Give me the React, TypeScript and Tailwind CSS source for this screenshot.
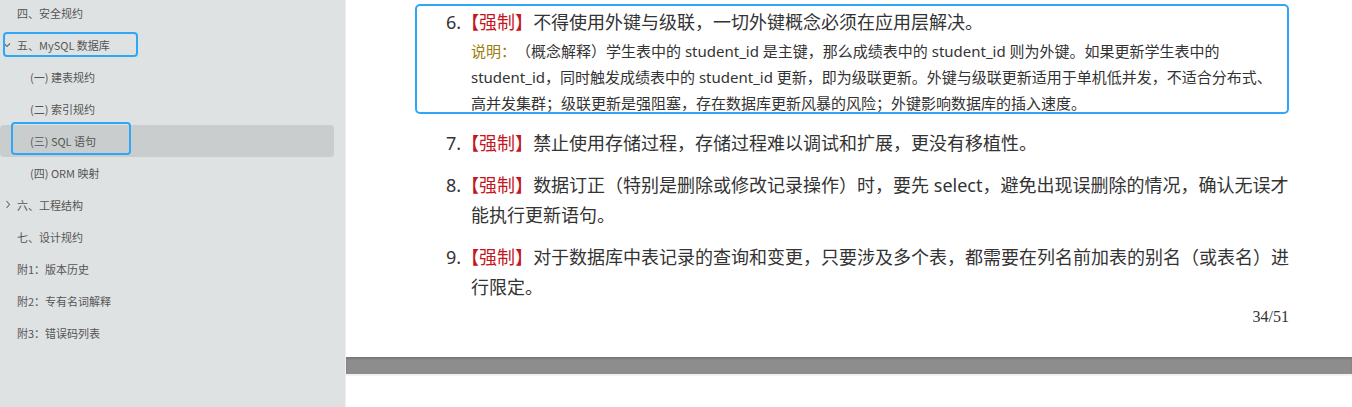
import React from "react"

type NavItem = {
  label: string
  level: 0 | 1
  chevron?: "down" | "right"
  active?: boolean
}

const navItems: NavItem[] = [
  { label: "四、安全规约", level: 0 },
  { label: "五、MySQL 数据库", level: 0, chevron: "down" },
  { label: "(一) 建表规约", level: 1 },
  { label: "(二) 索引规约", level: 1 },
  { label: "(三) SQL 语句", level: 1, active: true },
  { label: "(四) ORM 映射", level: 1 },
  { label: "六、工程结构", level: 0, chevron: "right" },
  { label: "七、设计规约", level: 0 },
  { label: "附1：版本历史", level: 0 },
  { label: "附2：专有名词解释", level: 0 },
  { label: "附3：错误码列表", level: 0 },
]

const docFont = { fontFamily: '"Noto Sans", "Noto Sans CJK SC", sans-serif' }

function Chevron({ dir }: { dir: "down" | "right" }) {
  if (dir === "down") {
    return (
      <svg width="8" height="6" viewBox="0 0 8 6" className="absolute left-[3px] top-[13px]">
        <polyline points="1,1.5 4,4.5 7,1.5" fill="none" stroke="#6b6b6b" strokeWidth="1.1" />
      </svg>
    )
  }
  return (
    <svg width="6" height="9" viewBox="0 0 6 9" className="absolute left-[5px] top-[11px]">
      <polyline points="1.5,1 4.5,4.5 1.5,8" fill="none" stroke="#6b6b6b" strokeWidth="1.1" />
    </svg>
  )
}

function Sidebar() {
  return (
    <aside
      className="relative w-[345px] shrink-0 h-[407px] bg-[#dfe2e3] overflow-hidden"
      style={{ fontFamily: '"Noto Sans CJK SC", sans-serif' }}
    >
      <ul className="-mt-[3px]">
        {navItems.map((item) => (
          <li
            key={item.label}
            className={`relative h-8 flex items-center w-[334px] rounded-[4px] text-[11px] text-[#555] ${
              item.level === 0 ? "pl-[17px]" : "pl-[30px]"
            } ${item.active ? "bg-[#cacdce]" : ""}`}
          >
            {item.chevron && <Chevron dir={item.chevron} />}
            {item.label}
          </li>
        ))}
      </ul>
      {/* highlight boxes */}
      <div className="absolute left-[3px] top-[32px] w-[135px] h-[25px] rounded-[4px] border-[2.5px] border-[#2ea8f6]" />
      <div className="absolute left-[11px] top-[122px] w-[120px] h-[33px] rounded-[4px] border-[2.5px] border-[#2ea8f6]" />
    </aside>
  )
}

function Tag() {
  return <span className="text-[#c4161c]">【强制】</span>
}

function Rule({ n, children, className = "" }: { n: number; children: React.ReactNode; className?: string }) {
  return (
    <div className={`pl-[25px] -indent-[25px] text-[18px] leading-[30px] text-[#333] ${className}`}>
      {n}.<Tag />
      {children}
    </div>
  )
}

function Page() {
  return (
    <main className="relative flex-1 h-[407px] bg-white border-l border-[#efefef]">
      <div className="h-[357px] pt-[7px] [text-spacing-trim:space-all]" style={docFont}>
        <div className="ml-[100px] w-[845px]">
          <Rule n={6}>不得使用外键与级联，一切外键概念必须在应用层解决。</Rule>
          <div className="pl-[25px] pt-[1px] text-[15px] leading-[26px] text-[#333] whitespace-nowrap">
            <span className="text-[#9a7d0a]">说明：</span>（概念解释）学生表中的 student_id 是主键，那么成绩表中的 student_id 则为外键。如果更新学生表中的
            <br />
            student_id，同时触发成绩表中的 student_id 更新，即为级联更新。外键与级联更新适用于单机低并发，不适合分布式、
            <br />
            高并发集群；级联更新是强阻塞，存在数据库更新风暴的风险；外键影响数据库的插入速度。
          </div>
          <Rule n={7} className="mt-[12px]">
            禁止使用存储过程，存储过程难以调试和扩展，更没有移植性。
          </Rule>
          <Rule n={8} className="mt-3">
            数据订正（特别是删除或修改记录操作）时，要先 select，避免出现误删除的情况，确认无误才
            <br />
            能执行更新语句。
          </Rule>
          <Rule n={9} className="mt-3">
            对于数据库中表记录的查询和变更，只要涉及多个表，都需要在列名前加表的别名（或表名）进
            <br />
            行限定。
          </Rule>
          <div
            className="w-[843px] text-right text-[16px] leading-[20px] mt-[5px] text-[#333]"
            style={{ fontFamily: '"Liberation Serif", serif' }}
          >
            34/51
          </div>
        </div>
      </div>
      <div className="h-[17px] bg-[#8d8d8d] shadow-[inset_0_2px_2px_rgba(0,0,0,0.15)]" />
      <div className="h-[2px] bg-[#f2f2f2]" />
      {/* callout box over rule 6 */}
      <div className="absolute left-[69px] top-[4px] w-[874px] h-[110px] rounded-[5px] border-[2.5px] border-[#2ea8f6]" />
    </main>
  )
}

export default function App() {
  return (
    <div className="flex w-[1352px] h-[407px] overflow-hidden">
      <Sidebar />
      <Page />
    </div>
  )
}
